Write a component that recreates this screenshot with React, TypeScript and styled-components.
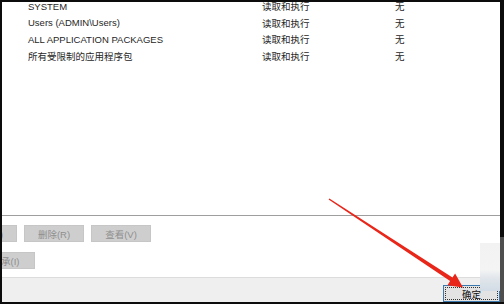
import styled, { createGlobalStyle } from "styled-components";

const GlobalStyle = createGlobalStyle`
  html, body {
    margin: 0;
    padding: 0;
    background: #000;
  }
  * {
    box-sizing: border-box;
  }
`;

const Font = `"Liberation Sans", "Noto Sans CJK SC", sans-serif`;

type Entry = { name: string; right: string; deny: string };

const entries: Entry[] = [
  { name: "SYSTEM", right: "读取和执行", deny: "无" },
  { name: "Users (ADMIN\\Users)", right: "读取和执行", deny: "无" },
  { name: "ALL APPLICATION PACKAGES", right: "读取和执行", deny: "无" },
  { name: "所有受限制的应用程序包", right: "读取和执行", deny: "无" },
];

const Frame = styled.div`
  position: relative;
  width: 504px;
  height: 304px;
  display: flex;
  border-top: 2px solid #0c0c0c;
  border-bottom: 2px solid #0c0c0c;
  border-left: 2px solid #0c0c0c;
  background: #0c0c0c;
  font-family: ${Font};
  overflow: hidden;
`;

const Dialog = styled.div`
  flex: 1;
  display: flex;
  flex-direction: column;
  overflow: hidden;
  background: #fff;
`;

const RightEdge = styled.div`
  width: 4px;
  background: linear-gradient(to bottom, #0c0c0c 235px, #4e4e4e 235px);
`;

const List = styled.div`
  height: 217px;
  flex: none;
  display: flex;
  flex-direction: column;
  margin-top: -4px;
  background: #fff;
`;

const Row = styled.div`
  display: grid;
  grid-template-columns: 234px 133px 1fr;
  height: 16.5px;
  align-items: center;
  padding-left: 26px;
  font-size: 9.5px;
  color: #262626;
  white-space: nowrap;
`;

const Separator = styled.div`
  height: 1px;
  flex: none;
  background: #9e9e9e;
`;

const ButtonArea = styled.div`
  height: 62px;
  flex: none;
  display: flex;
  flex-direction: column;
  gap: 10px;
  padding-top: 9px;
  margin-left: -45px;
  border-bottom: 1px solid #dcdcdc;
`;

const ButtonRow = styled.div`
  display: flex;
  gap: 7px;
`;

const GrayButton = styled.div<{ $w?: number }>`
  width: ${(p) => p.$w ?? 60}px;
  height: 17px;
  flex: none;
  display: flex;
  align-items: center;
  justify-content: center;
  background: #cecece;
  border: 1px solid #c6c6c6;
  color: #8f8f8f;
  font-size: 9.5px;
  white-space: nowrap;
`;

const Footer = styled.div`
  flex: 1;
  display: flex;
  justify-content: flex-end;
  align-items: flex-start;
  padding-top: 7px;
  background: #efefef;
`;

const OkButton = styled.div`
  width: 57px;
  height: 17px;
  border: 1px solid #3a78ad;
  background: #e3e3e3;
  padding: 1px;
  display: flex;
`;

const OkInner = styled.div`
  flex: 1;
  display: flex;
  align-items: center;
  justify-content: center;
  border: 1px dotted #333;
  color: #111;
  font-size: 9.5px;
`;

const Smudge = styled.div`
  position: absolute;
  right: 4px;
  top: 241px;
  width: 20px;
  height: 48px;
  background: linear-gradient(
    to bottom,
    #f2f2f2 0%,
    #f4f4f4 55%,
    #dfe5ea 75%,
    #d2dce6 100%
  );
`;

const ArrowLayer = styled.svg`
  position: absolute;
  left: -2px;
  top: -2px;
  pointer-events: none;
`;

function RedArrow() {
  return (
    <ArrowLayer width="504" height="304" viewBox="0 0 504 304">
      <polygon
        fill="#e8261a"
        points="329.4,198.4 452.5,277.5 455.1,273.4 463,287.5 447.5,285.2 450.1,281.1 328.6,199.6"
      />
    </ArrowLayer>
  );
}

export default function App() {
  return (
    <>
      <GlobalStyle />
      <Frame>
        <Dialog>
          <List>
            {entries.map((e) => (
              <Row key={e.name}>
                <span>{e.name}</span>
                <span>{e.right}</span>
                <span>{e.deny}</span>
              </Row>
            ))}
          </List>
          <Separator />
          <ButtonArea>
            <ButtonRow>
              <GrayButton>添加(D)</GrayButton>
              <GrayButton>删除(R)</GrayButton>
              <GrayButton>查看(V)</GrayButton>
            </ButtonRow>
            <ButtonRow>
              <GrayButton $w={78}>禁用继承(I)</GrayButton>
            </ButtonRow>
          </ButtonArea>
          <Footer>
            <OkButton>
              <OkInner>确定</OkInner>
            </OkButton>
          </Footer>
        </Dialog>
        <RightEdge />
        <Smudge />
        <RedArrow />
      </Frame>
    </>
  );
}
